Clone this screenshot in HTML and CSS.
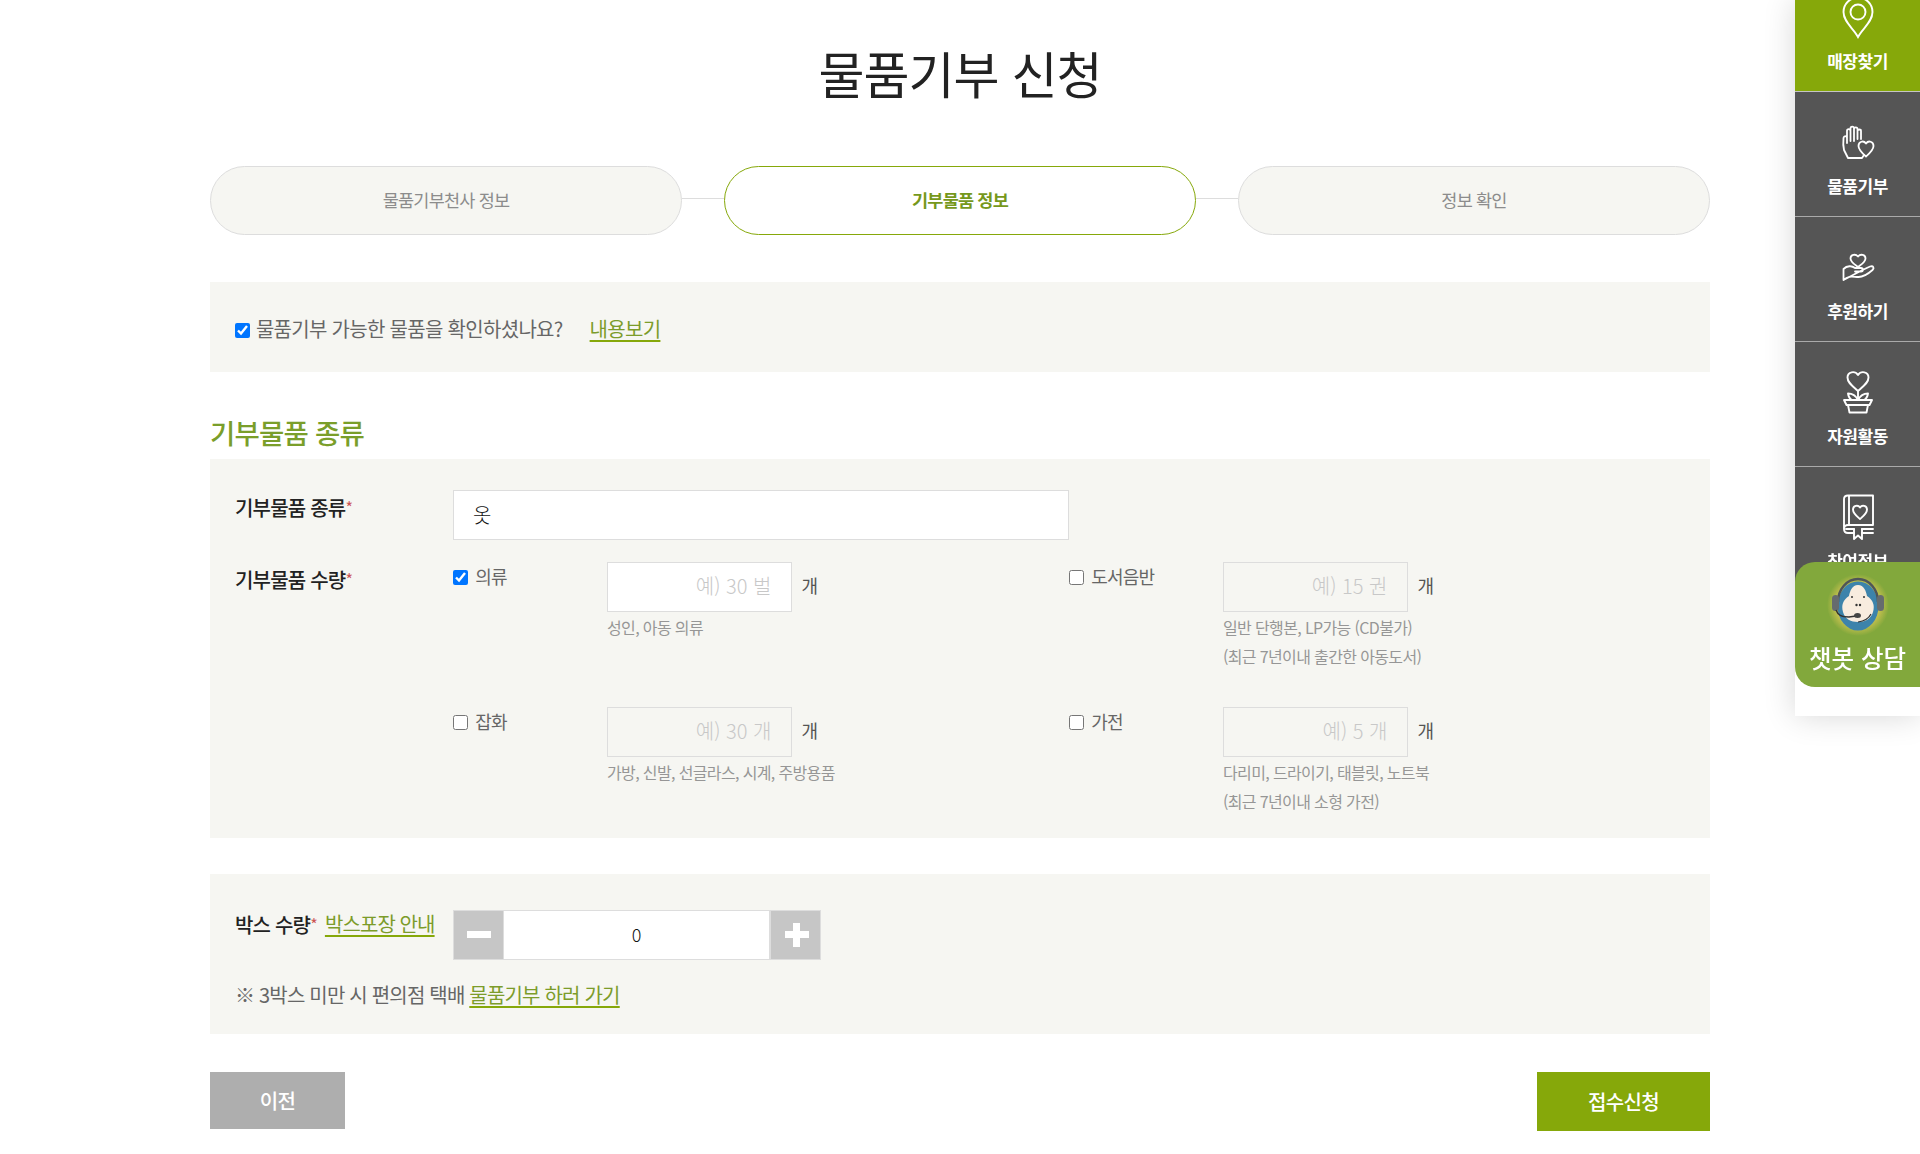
FILE: index.html
```html
<!DOCTYPE html>
<html lang="ko">
<head>
<meta charset="utf-8">
<title>물품기부 신청</title>
<link rel="stylesheet" href="styles.css">
</head>
<body>
<main class="page">
  <h1 class="title">물품기부 신청</h1>
  <ol class="steps">
    <li class="step">물품기부천사 정보</li>
    <li class="step active">기부물품 정보</li>
    <li class="step">정보 확인</li>
  </ol>
  <div class="notice">
    <label class="notice-check"><input type="checkbox" checked> 물품기부 가능한 물품을 확인하셨나요?</label>
    <a class="link" href="#">내용보기</a>
  </div>
  <h2 class="section-title">기부물품 종류</h2>
  <section class="panel kinds">
    <div class="row-kind">
      <div class="field-label">기부물품 종류<span class="req">*</span></div>
      <input class="text-input kind-input" type="text" value="옷">
    </div>
    <div class="row-qty">
      <div class="field-label">기부물품 수량<span class="req">*</span></div>
      <div class="qty-grid">
        <div class="qty-item">
          <label class="qty-check"><input type="checkbox" checked> 의류</label>
          <div class="qty-main">
            <div class="qty-line"><input class="text-input qty-input" type="text" placeholder="예) 30 벌"><span class="unit">개</span></div>
            <p class="hint">성인, 아동 의류</p>
          </div>
        </div>
        <div class="qty-item">
          <label class="qty-check"><input type="checkbox"> 도서음반</label>
          <div class="qty-main">
            <div class="qty-line"><input class="text-input qty-input off" type="text" placeholder="예) 15 권"><span class="unit">개</span></div>
            <p class="hint">일반 단행본, LP가능 (CD불가)<br>(최근 7년이내 출간한 아동도서)</p>
          </div>
        </div>
        <div class="qty-item">
          <label class="qty-check"><input type="checkbox"> 잡화</label>
          <div class="qty-main">
            <div class="qty-line"><input class="text-input qty-input off" type="text" placeholder="예) 30 개"><span class="unit">개</span></div>
            <p class="hint">가방, 신발, 선글라스, 시계, 주방용품</p>
          </div>
        </div>
        <div class="qty-item">
          <label class="qty-check"><input type="checkbox"> 가전</label>
          <div class="qty-main">
            <div class="qty-line"><input class="text-input qty-input off" type="text" placeholder="예) 5 개"><span class="unit">개</span></div>
            <p class="hint">다리미, 드라이기, 태블릿, 노트북<br>(최근 7년이내 소형 가전)</p>
          </div>
        </div>
      </div>
    </div>
  </section>
  <section class="panel boxes">
    <div class="box-row">
      <div class="box-label"><span class="field-label inline">박스 수량<span class="req">*</span></span><a class="link" href="#">박스포장 안내</a></div>
      <div class="stepper">
        <button class="step-btn" type="button" aria-label="감소"><span class="bar"></span></button>
        <input class="step-value" type="text" value="0">
        <button class="step-btn plus" type="button" aria-label="증가"><span class="bar"></span><span class="bar vert"></span></button>
      </div>
    </div>
    <p class="box-note">※ 3박스 미만 시 편의점 택배 <a class="link" href="#">물품기부 하러 가기</a></p>
  </section>
  <div class="actions">
    <button class="btn prev" type="button">이전</button>
    <button class="btn submit" type="button">접수신청</button>
  </div>
</main>

<aside class="side">
  <a class="side-item first" href="#">
    <svg class="side-icon" viewBox="0 0 46 46" fill="none" stroke="#fff" stroke-width="1.9"><path d="M23 43 C19 35 8.500 28 8.500 18 A14.500 14.500 0 0 1 37.500 18 C37.500 28 27 35 23 43 Z"/><circle cx="23" cy="18" r="7.500"/></svg>
    <span class="side-label">매장찾기</span>
  </a>
  <a class="side-item" href="#">
    <svg class="side-icon" viewBox="0 0 46 46" fill="none" stroke="#fff" stroke-width="1.8" stroke-linejoin="round" stroke-linecap="round"><path d="M13 39 L9 31 C8.300 28 8 24 8.500 19 C9 16.500 11.500 16.500 12 19 L12 24 M12 24 L12 12 C12 9.500 15.500 9.500 15.500 12 L15.500 22 M15.500 22 L15.500 9.500 C15.500 7 19 7 19 9.500 L19 22 M19 22 L19 10 C19 7.800 22.500 7.800 22.500 10 L22.500 20 M22.500 20 L22.500 12 C22.500 10 26 10 26 12 L26 20 M13 39 L27 39 L29 36"/><path d="M31 37.500 C27 34 23.500 31 23.500 27 C23.500 22.500 28.500 21 31 24.500 C33.500 21 38.500 22.500 38.500 27 C38.500 31 35 34 31 37.500 Z"/></svg>
    <span class="side-label">물품기부</span>
  </a>
  <a class="side-item" href="#">
    <svg class="side-icon" viewBox="0 0 46 46" fill="none" stroke="#fff" stroke-width="1.8" stroke-linejoin="round" stroke-linecap="round"><path d="M23 23 C19 20 15.500 18 15.500 14.500 C15.500 10.500 20.500 9.500 23 12.500 C25.500 9.500 30.500 10.500 30.500 14.500 C30.500 18 27 20 23 23 Z"/><path d="M8.500 36 L8.500 25 C12 21.500 17 21.500 20 24 L26 24 C28.500 24 28.500 27.500 26 27.500 L20 27.500 M27.500 26 L35 22.500 C38.500 21.500 39.500 24 37.500 26 C33 30 28 33 23.500 33 C18 33 14 31 8.500 36 Z"/></svg>
    <span class="side-label">후원하기</span>
  </a>
  <a class="side-item" href="#">
    <svg class="side-icon" viewBox="0 0 46 46" fill="none" stroke="#fff" stroke-width="1.9" stroke-linejoin="round" stroke-linecap="round"><path d="M23 22 C17 16.500 12.500 13.500 12.500 8.500 C12.500 2.500 20 1.500 23 6 C26 1.500 33.500 2.500 33.500 8.500 C33.500 13.500 29 16.500 23 22 Z"/><path d="M23 22 L23 31"/><path d="M23 31 C21 27 17 24.500 13 24.500 C13.500 28 15 30 17 31 M23 31 C25 27 29 24.500 33 24.500 C32.500 28 31 30 29 31"/><path d="M9 31 L37 31 L34.500 36 L11.500 36 Z M13 36 L14.500 43.500 L31.500 43.500 L33 36"/></svg>
    <span class="side-label">자원활동</span>
  </a>
  <a class="side-item" href="#">
    <svg class="side-icon" viewBox="0 0 46 46" fill="none" stroke="#fff" stroke-width="1.9" stroke-linejoin="round" stroke-linecap="round"><path d="M9 35 L9 5 C9 2.500 10.500 1.500 13 1.500 L38 1.500 L38 31 L13 31 C10.500 31 9 32.500 9 35 C9 37.500 10.500 39 13 39 L19 39 M27 39 L38 39 M11 35 L19 35 M27 35 L38 35 M14 1.500 L14 31"/><path d="M19 35 L19 45 L23 41.500 L27 45 L27 35"/><path d="M25 25 C21.500 22 18 19.500 18 15.500 C18 11.500 23 10.500 25 13.500 C27 10.500 32 11.500 32 15.500 C32 19.500 28.500 22 25 25 Z"/></svg>
    <span class="side-label">참여정보</span>
  </a>
  <a class="chatbot" href="#">
    <svg class="chat-face" viewBox="0 0 62 62">
      <defs>
        <radialGradient id="glow">
          <stop offset="70%" stop-color="#c5c04f"/>
          <stop offset="100%" stop-color="#82a83c"/>
        </radialGradient>
      </defs>
      <circle cx="31" cy="31" r="31" fill="url(#glow)"/>
      <ellipse cx="31" cy="32" rx="20.500" ry="24.500" fill="#3d83ab"/>
      <path d="M11 28 A20 23 0 0 1 51 28" fill="none" stroke="#4f5558" stroke-width="2.500"/>
      <rect x="5" y="21" width="7" height="16" rx="3.500" fill="#666b6e"/>
      <rect x="50" y="21" width="7" height="16" rx="3.500" fill="#666b6e"/>
      <path d="M31 11 C37 11 39 17 40 22 C46 26 48 31 46 38 C44 45 38 48 31 48 C24 48 18 45 16 38 C14 31 16 26 22 22 C23 17 25 11 31 11 Z" fill="#f8ecdf"/>
      <circle cx="25" cy="23" r="1" fill="#333"/>
      <circle cx="37" cy="23" r="1" fill="#333"/>
      <circle cx="29.500" cy="31" r="1.200" fill="#333"/>
      <circle cx="33" cy="31" r="1.200" fill="#333"/>
      <path d="M9 36 C11 41 14 43 22 43 L29 42" fill="none" stroke="#333" stroke-width="1.500"/>
      <ellipse cx="30.500" cy="41.500" rx="3.500" ry="2.500" fill="#444"/>
      <path d="M31 48 C38 47 42 44 44 40" fill="none" stroke="#333" stroke-width="1.200"/>
    </svg>
    <span class="chat-label">챗봇 상담</span>
  </a>
</aside>
</body>
</html>
```
FILE: styles.css
```css
* { box-sizing: border-box; }
html, body { margin: 0; height: 1154px; overflow: hidden; background: #fff; }
body {
  font-family: "Noto Sans CJK KR", "Noto Sans", sans-serif;
  color: #444;
  letter-spacing: -0.05em;
}
.page { width: 1500px; margin: 0 auto; }
.title {
  margin: 0;
  height: 166px;
  padding-top: 36px;
  font-size: 50px;
  line-height: 72px;
  font-weight: 400;
  text-align: center;
  color: #222;
  letter-spacing: -0.02em;
}
.steps {
  list-style: none;
  margin: 0;
  padding: 0;
  display: grid;
  grid-template-columns: repeat(3, 472px);
  justify-content: space-between;
}
.step {
  position: relative;
  height: 69px;
  border: 1px solid #ddd;
  border-radius: 35px;
  background: #f6f6f2;
  color: #8c8c8c;
  font-size: 17.500px;
  line-height: 65px;
  text-align: center;
}
.step + .step::before {
  content: "";
  position: absolute;
  left: -43px;
  top: 31px;
  width: 42px;
  height: 1px;
  background: #ddd;
}
.step.active {
  border-color: #86a80a;
  background: #fff;
  color: #76981c;
  font-weight: 700;
}
.notice {
  margin-top: 47px;
  height: 90px;
  background: #f6f6f2;
  padding: 30px 25px 0;
  display: flex;
  align-items: flex-start;
  gap: 27px;
  font-size: 20px;
  line-height: 34px;
  letter-spacing: -0.035em;
}
.notice-check { color: #666; }
.notice-check input { width: 15px; height: 15px; margin: 0 1px 0 0; vertical-align: -1px; }
.link {
  color: #7c9c2a;
  text-decoration: underline;
  text-decoration-color: #86a80a;
  text-underline-offset: 3px;
}
.section-title {
  margin: 0;
  height: 87px;
  padding-top: 41px;
  font-size: 27.500px;
  line-height: 38px;
  font-weight: 500;
  color: #7a9e2a;
}
.panel { background: #f6f6f2; padding: 0 25px; }
.kinds { height: 379px; padding-top: 31px; }
.row-kind, .row-qty {
  display: grid;
  grid-template-columns: 218px 1fr;
}
.row-kind { margin-bottom: 22px; }
.field-label {
  font-size: 20px;
  line-height: 28px;
  font-weight: 500;
  color: #222;
  padding-top: 3px;
}
.field-label.inline { padding-top: 0; }
.req { color: #c55; font-size: 16px; font-weight: 400; vertical-align: 2px; }
.text-input {
  height: 50px;
  border: 1px solid #ddd;
  border-radius: 0;
  background: #fff;
  font-family: inherit;
  color: #111;
  outline: none;
}
.kind-input {
  width: 616px;
  padding: 0 19px 2px;
  font-size: 20px;
  font-weight: 300;
}
.qty-grid {
  display: grid;
  grid-template-columns: 616px 1fr;
  grid-auto-rows: 145px;
}
.qty-item { display: grid; grid-template-columns: 154px 1fr; }
.qty-check { font-size: 18px; line-height: 28px; color: #666; padding-top: 0; }
.qty-check input { width: 15px; height: 15px; margin: 0 3px 0 0; vertical-align: -1px; }
.qty-line { display: flex; align-items: flex-start; gap: 10px; }
.qty-input {
  width: 184.500px;
  padding: 0 19px 3px 15px;
  font-size: 20px;
  font-weight: 300;
  text-align: right;
  letter-spacing: 0;
}
.qty-input.off { background: #f6f6f2; }
.qty-input::placeholder { color: #c8c8c8; }
.unit { font-size: 18px; line-height: 46px; color: #555; }
.hint {
  margin: 1px 0 0;
  font-size: 16px;
  line-height: 29px;
  color: #969696;
  letter-spacing: -0.04em;
}
.boxes { margin-top: 36px; height: 160px; padding-top: 36px; }
.box-row { display: flex; align-items: flex-start; }
.box-label {
  width: 218px;
  display: flex;
  gap: 8px;
  line-height: 28px;
  padding-top: 0;
}
.box-label .link { font-size: 20px; white-space: nowrap; letter-spacing: -0.045em; }
.stepper { display: flex; height: 50px; border: 1px solid #ddd; }
.step-btn {
  position: relative;
  width: 49px;
  border: 0;
  padding: 0;
  background: #c6c6c6;
}
.step-btn .bar {
  position: absolute;
  left: 13px;
  top: 20px;
  width: 24px;
  height: 7px;
  background: #fff;
}
.step-btn.plus .bar { left: 14px; }
.step-btn.plus .bar.vert { left: 22px; top: 12px; width: 7px; height: 24px; }
.step-value {
  width: 268px;
  border: 0;
  border-left: 1px solid #ddd;
  border-right: 2px solid #ddd;
  padding: 0 0 3px;
  background: #fff;
  text-align: center;
  font-family: inherit;
  font-size: 18px;
  font-weight: 300;
  color: #111;
  outline: none;
}
.box-note {
  margin: 18px 0 0;
  font-size: 20px;
  line-height: 34px;
  color: #666;
}
.actions {
  margin-top: 38px;
  display: flex;
  justify-content: space-between;
  align-items: flex-start;
}
.btn {
  border: 0;
  color: #fff;
  font-family: inherit;
  font-size: 20px;
  font-weight: 500;
  letter-spacing: -0.03em;
}
.prev { width: 135px; height: 57px; background: #aeaeae; }
.submit { width: 173px; height: 59px; background: #86a80a; }

.side {
  position: fixed;
  top: 0;
  right: 0;
  width: 125px;
  height: 716px;
  background: #fff;
  box-shadow: 0 0 30px rgba(0, 0, 0, 0.16);
  display: flex;
  flex-direction: column;
  letter-spacing: -0.03em;
}
.side-item {
  flex: none;
  height: 125px;
  display: flex;
  flex-direction: column;
  align-items: center;
  justify-content: flex-end;
  padding-bottom: 19px;
  background: #555;
  border-bottom: 1px solid #aaa;
  color: #fff;
  text-decoration: none;
}
.side-item.first { height: 92px; background: #86a80a; border-bottom-color: #c5c5c5; }
.side-icon { flex: none; width: 46px; height: 46px; margin-bottom: 10px; }
.side-label { font-size: 17px; line-height: 22px; font-weight: 700; }
.chatbot {
  position: absolute;
  left: 0;
  top: 562px;
  width: 125px;
  height: 125px;
  border-radius: 20px 0 0 20px;
  background: #82a83c;
  color: #fff;
  text-decoration: none;
  display: flex;
  flex-direction: column;
  align-items: center;
  padding-top: 12px;
}
.chat-face { flex: none; width: 62px; height: 62px; }
.chat-label { margin-top: 5px; font-size: 24.500px; line-height: 34px; font-weight: 500; letter-spacing: 0; white-space: nowrap; }
```
